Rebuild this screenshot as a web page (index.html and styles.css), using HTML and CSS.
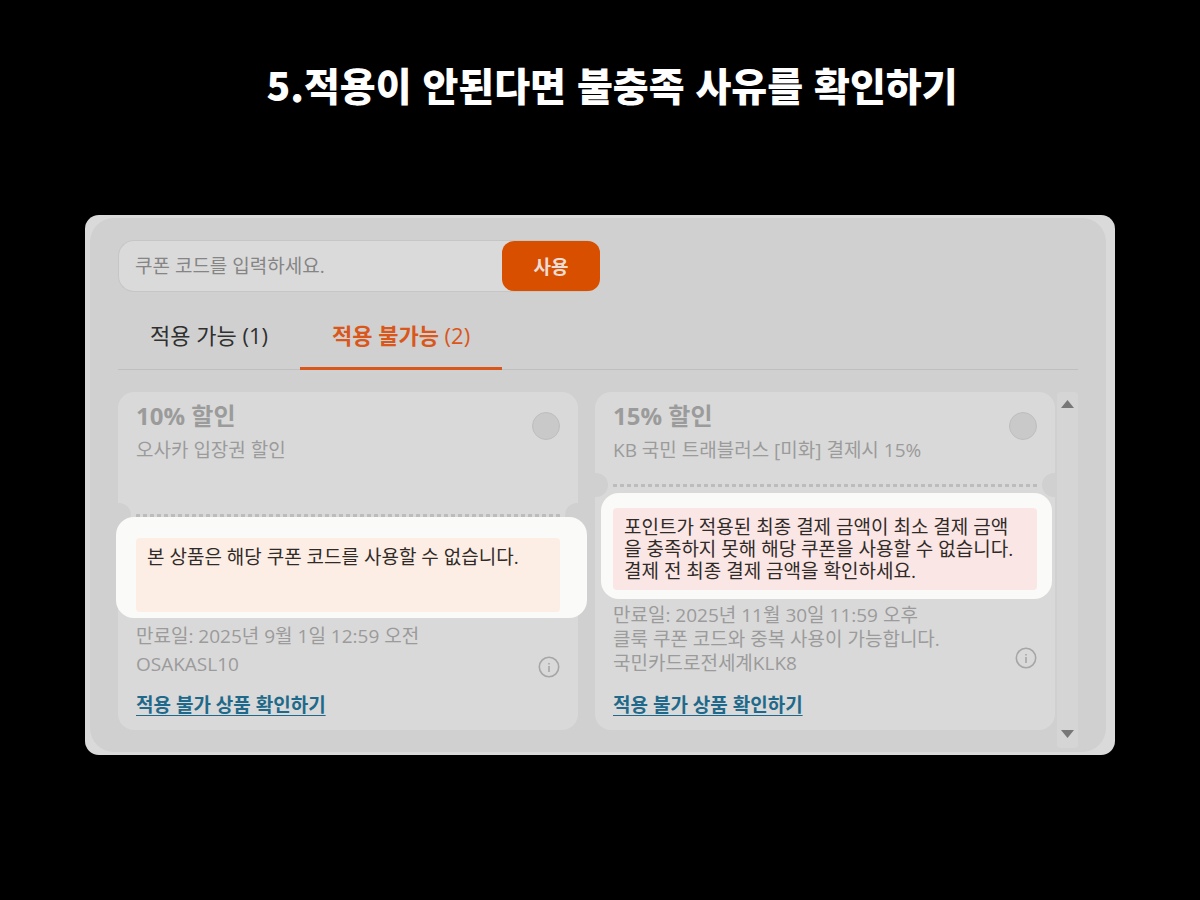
FILE: index.html
```html
<!DOCTYPE html>
<html lang="ko">
<head>
    <meta charset="UTF-8">
    <meta name="viewport" content="width=device-width, initial-scale=1.0">
    <title>쿠폰 적용 안내</title>
    <link rel="stylesheet" href="styles.css">
</head>
<body>
    <h1>5.적용이 안된다면 불충족 사유를 확인하기</h1>

    <main class="frame">
        <div class="panel">
            <form class="code-form">
                <input type="text" id="couponCode" aria-label="쿠폰 코드" placeholder="쿠폰 코드를 입력하세요.">
                <button type="button">사용</button>
            </form>

            <div class="tabs">
                <button type="button" class="tab">적용 가능 (1)</button>
                <button type="button" class="tab active"><b>적용 불가능</b> (2)</button>
            </div>

            <div class="list">
                <div class="coupons">
                    <section class="coupon short">
                        <div class="coupon-head">
                            <div>
                                <h2>10% 할인</h2>
                                <p>오사카 입장권 할인</p>
                            </div>
                            <input type="radio" name="coupon" aria-label="10% 할인" disabled>
                        </div>
                        <div class="divider"></div>
                        <div class="spotlight">
                            <p class="notice">본 상품은 해당 쿠폰 코드를 사용할 수 없습니다.</p>
                        </div>
                        <div class="details">
                            <div>
                                <p>만료일: 2025년 9월 1일 12:59 오전</p>
                                <p>OSAKASL10</p>
                            </div>
                            <svg class="info" viewBox="0 0 22 22">
                                <circle cx="11" cy="11" r="9.7"/>
                                <path d="M11 10v6M11 7v1.5"/>
                            </svg>
                        </div>
                        <a href="#">적용 불가 상품 확인하기</a>
                    </section>

                    <section class="coupon long">
                        <div class="coupon-head">
                            <div>
                                <h2>15% 할인</h2>
                                <p>KB 국민 트래블러스 [미화] 결제시 15%</p>
                            </div>
                            <input type="radio" name="coupon" aria-label="15% 할인" disabled>
                        </div>
                        <div class="divider"></div>
                        <div class="spotlight">
                            <p class="notice">포인트가 적용된 최종 결제 금액이 최소 결제 금액<br>을 충족하지 못해 해당 쿠폰을 사용할 수 없습니다.<br>결제 전 최종 결제 금액을 확인하세요.</p>
                        </div>
                        <div class="details">
                            <div>
                                <p>만료일: 2025년 11월 30일 11:59 오후</p>
                                <p>클룩 쿠폰 코드와 중복 사용이 가능합니다.</p>
                                <p>국민카드로전세계KLK8</p>
                            </div>
                            <svg class="info" viewBox="0 0 22 22">
                                <circle cx="11" cy="11" r="9.7"/>
                                <path d="M11 10v6M11 7v1.5"/>
                            </svg>
                        </div>
                        <a href="#">적용 불가 상품 확인하기</a>
                    </section>
                </div>

                <div class="scrollbar">
                    <button type="button" aria-label="위로"><svg viewBox="0 0 13 8"><path d="M0 8L6.5 0L13 8Z"/></svg></button>
                    <button type="button" aria-label="아래로"><svg viewBox="0 0 13 8"><path d="M0 0L6.5 8L13 0Z"/></svg></button>
                </div>
            </div>
        </div>
    </main>
</body>
</html>
```
FILE: styles.css
```css
* {
    box-sizing: border-box;
}

body {
    margin: 0;
    padding: 56px 85px;
    background-color: #000;
    font-family: "Open Sans", "Noto Sans CJK KR", sans-serif;
    font-size: 19px;
    color: #9b9b9b;
}

h1, h2, p {
    margin: 0;
}

h1 {
    margin-bottom: 103px;
    padding-left: 24px;
    font-family: "Noto Sans CJK KR", sans-serif;
    font-size: 39px;
    font-weight: 900;
    line-height: 56px;
    text-align: center;
    color: #fff;
}

button, input {
    margin: 0;
    font: inherit;
}

button {
    border: none;
    cursor: pointer;
}

.frame {
    padding: 3px 9px 3px 5px;
    background-color: #dadada;
    border-radius: 14px;
}

.panel {
    padding: 22px 28px 4px;
    background-color: #d0d0d0;
    border-radius: 24px;
}

/* coupon code */
.code-form {
    display: flex;
    width: 50%;
    min-width: 482px;
    height: 52px;
    background-color: #dadada;
    border: 1px solid #c6c6c6;
    border-right: none;
    border-radius: 16px;
}

.code-form input {
    flex: 1;
    min-width: 0;
    padding: 0 16px;
    background: none;
    border: none;
}

.code-form input::placeholder {
    color: #858585;
    opacity: 1;
}

.code-form button {
    width: 98px;
    background-color: #d94f00;
    border-radius: 12px;
    font-weight: bold;
    color: #ecdcd3;
}

/* tabs */
.tabs {
    display: flex;
    height: 78px;
    border-bottom: 1px solid #bfbfbf;
}

.tab {
    height: 78px;
    padding: 9px 32px 0;
    background: none;
    border-bottom: 3px solid transparent;
    font-size: 22px;
    color: #303030;
}

.tab.active {
    border-color: #d9571a;
    color: #d9571a;
}

/* coupons */
.list {
    display: flex;
    align-items: flex-start;
    gap: 2px;
    padding-top: 22px;
}

.coupons {
    flex: 1;
    display: grid;
    grid-template-columns: 1fr 1fr;
    gap: 17px;
}

.coupon {
    display: flex;
    flex-direction: column;
    padding: 8px 18px 13px;
    background-color: #d9d9d9;
    border-radius: 16px;
}

.coupon-head {
    flex: 1;
    display: flex;
    justify-content: space-between;
    padding-bottom: 20px;
}

h2 {
    margin-bottom: 4px;
    font-size: 24px;
    line-height: 32px;
}

.coupon-head p {
    line-height: 28px;
}

.coupon-head input {
    appearance: none;
    width: 28px;
    height: 28px;
    margin-top: 12px;
    background-color: #c9c9c9;
    border: 1px solid #bebebe;
    border-radius: 50%;
}

.divider {
    position: relative;
    height: 3px;
    background: repeating-linear-gradient(90deg, #bcbcbc 0 4px, transparent 4px 7px);
}

.divider::before, .divider::after {
    content: "";
    position: absolute;
    top: -11px;
    width: 13px;
    height: 24px;
    background-color: #d0d0d0;
}

.divider::before {
    left: -18px;
    border-radius: 0 12px 12px 0;
}

.divider::after {
    right: -18px;
    border-radius: 12px 0 0 12px;
}

.spotlight {
    position: relative;
    background-color: #fafaf8;
    border-radius: 18px;
}

.short .spotlight {
    margin: 0 -27px 0 -20px;
    padding: 21px 27px 6px 20px;
}

.long .spotlight {
    margin: 6px -15px 0 -12px;
    padding: 15px 15px 9px 12px;
}

.notice {
    min-height: 74px;
    padding: 8px 11px;
    background-color: #fdeee5;
    border-radius: 4px;
    line-height: 22px;
    color: #302b28;
    white-space: nowrap;
}

.long .notice {
    background-color: #fae6e5;
}

.details {
    display: flex;
    justify-content: space-between;
    align-items: flex-end;
    margin-bottom: 15px;
    padding-top: 4px;
    line-height: 28px;
}

.long .details {
    margin-bottom: 18px;
    line-height: 24px;
}

.info {
    width: 22px;
    height: 22px;
    fill: none;
    stroke: #a6a6a6;
    stroke-width: 1.6;
}

.long .info {
    margin-bottom: 6px;
}

.coupon a {
    align-self: flex-start;
    font-weight: bold;
    line-height: 24px;
    color: #20698a;
    text-underline-offset: 3px;
}

/* scrollbar */
.scrollbar {
    display: flex;
    flex-direction: column;
    justify-content: space-between;
    width: 21px;
    height: 356px;
    padding-bottom: 2px;
    background-color: #d5d5d5;
    border-radius: 4px;
}

.scrollbar button {
    height: 24px;
    padding: 0;
    background: none;
}

.scrollbar svg {
    display: block;
    width: 13px;
    height: 8px;
    margin: 0 auto;
    fill: #777;
}
```
